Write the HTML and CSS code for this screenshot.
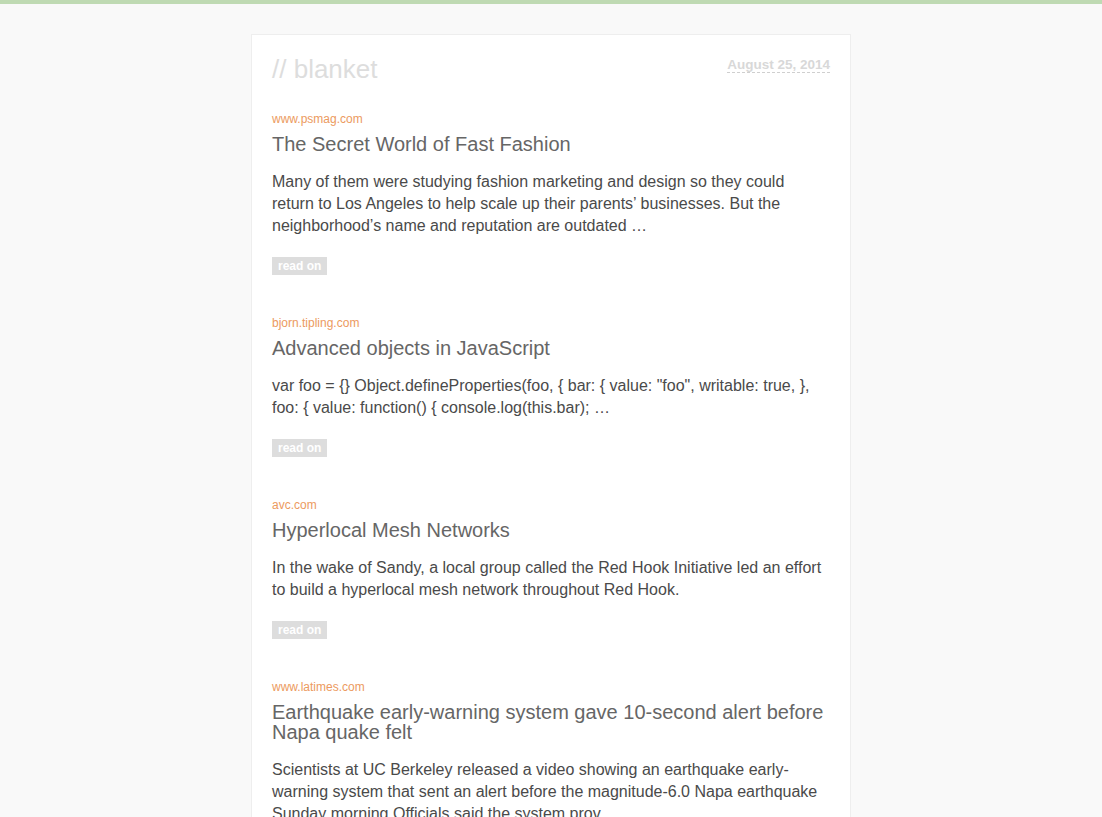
FILE: index.html
```html
<!DOCTYPE html>
<html>
<head>
<meta charset="utf-8">
<link rel="stylesheet" href="styles.css">
</head>
<body>
<div class="topbar"></div>
<div class="card">
  <header class="head">
    <h1 class="logo">// blanket</h1>
    <abbr class="date">August 25, 2014</abbr>
  </header>
  <article class="item">
    <div class="source">www.psmag.com</div>
    <h2 class="title">The Secret World of Fast Fashion</h2>
    <p class="body">Many of them were studying fashion marketing and design so they could return to Los Angeles to help scale up their parents’ businesses. But the neighborhood’s name and reputation are outdated …</p>
    <a class="more">read on</a>
  </article>
  <article class="item">
    <div class="source">bjorn.tipling.com</div>
    <h2 class="title">Advanced objects in JavaScript</h2>
    <p class="body">var foo = {} Object.defineProperties(foo, { bar: { value: "foo", writable: true, }, foo: { value: function() { console.log(this.bar); …</p>
    <a class="more">read on</a>
  </article>
  <article class="item">
    <div class="source">avc.com</div>
    <h2 class="title">Hyperlocal Mesh Networks</h2>
    <p class="body">In the wake of Sandy, a local group called the Red Hook Initiative led an effort to build a hyperlocal mesh network throughout Red Hook.</p>
    <a class="more">read on</a>
  </article>
  <article class="item">
    <div class="source">www.latimes.com</div>
    <h2 class="title">Earthquake early-warning system gave 10-second alert before Napa quake felt</h2>
    <p class="body">Scientists at UC Berkeley released a video showing an earthquake early-warning system that sent an alert before the magnitude-6.0 Napa earthquake Sunday morning Officials said the system prov…</p>
    <a class="more">read on</a>
  </article>
</div>
</body>
</html>
```
FILE: styles.css
```css
html, body {
  margin: 0;
  padding: 0;
  background: #f9f9f9;
  font-family: "Liberation Sans", Arial, sans-serif;
}
.topbar {
  height: 4px;
  background: #bfdab3;
}
.card {
  width: 558px;
  margin: 30px auto 40px;
  background: #fff;
  border: 1px solid #eeeeee;
  padding: 19px 20px 20px;
}
.head {
  display: flex;
  justify-content: space-between;
  align-items: flex-start;
  height: 31px;
}
.logo {
  margin: 0;
  font-size: 26px;
  line-height: 30px;
  font-weight: normal;
  color: #dddddd;
}
.date {
  margin-top: 3px;
  font-size: 13.5px;
  line-height: 15px;
  font-weight: bold;
  color: #d8d8d8;
  text-decoration: none;
  border-bottom: 1px dashed #cfcfcf;
}
.item {
  margin-top: 26px;
}
.item + .item {
  margin-top: 40px;
}
.source {
  font-size: 12px;
  line-height: 16px;
  color: #ec9a60;
}
.title {
  margin: 7px 0 0;
  font-size: 20px;
  line-height: 20px;
  font-weight: normal;
  color: #666666;
}
.body {
  margin: 17px 0 0;
  font-size: 16px;
  line-height: 22px;
  color: #4a4a4a;
}
.more {
  display: inline-block;
  margin-top: 20px;
  padding: 0 6px;
  height: 18px;
  line-height: 18px;
  font-size: 12px;
  font-weight: bold;
  color: #ffffff;
  background: #dddddd;
}
```
